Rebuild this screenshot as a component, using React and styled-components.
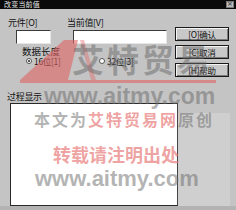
import React from "react";
import styled, { createGlobalStyle } from "styled-components";

const Global = createGlobalStyle`
  html, body { margin: 0; padding: 0; }
  body { width: 236px; height: 210px; overflow: hidden; background: #c3c3c3; }
  * { box-sizing: border-box; }
`;

const CJK = `"Noto Sans CJK SC", "Noto Sans", sans-serif`;

const Window = styled.div`
  position: relative;
  width: 236px;
  height: 210px;
  background: #c4c4c4;
  font-family: ${CJK};
  color: #111;
  display: flex;
  flex-direction: column;
  overflow: hidden;
`;

const TitleBar = styled.div`
  height: 9px;
  background: #0a0a0a;
  display: flex;
  align-items: center;
  justify-content: space-between;
  padding: 0 2px 0 4px;
`;

const Title = styled.span`
  color: #e8e8e8;
  font-size: 7px;
  line-height: 9px;
  letter-spacing: 0.2px;
`;

const CloseBtn = styled.span`
  width: 8px;
  height: 7px;
  background: #bdbdbd;
  border: 1px solid #777;
  font-size: 7px;
  line-height: 5px;
  text-align: center;
  color: #222;
  font-family: "DejaVu Sans", sans-serif;
`;

const Body = styled.div`
  flex: 1;
  display: flex;
  flex-direction: column;
  border-bottom: 8px solid #b3b3b3;
`;

const Top = styled.div`
  display: flex;
  height: 82px;
`;

const Left = styled.div`
  width: 175px;
  display: flex;
  flex-direction: column;
`;

const FieldRow = styled.div`
  display: flex;
  gap: 16px;
  padding: 8px 0 0 8px;
`;

const Field = styled.div`
  display: flex;
  flex-direction: column;
`;

const Label = styled.span`
  font-size: 9px;
  line-height: 12px;
  height: 12px;
  letter-spacing: -0.3px;
  white-space: nowrap;
  margin-left: ${(p) => p.$indent || 0}px;
`;

const Input = styled.div`
  margin-top: 1px;
  margin-left: ${(p) => p.$indent}px;
  width: ${(p) => p.$w}px;
  height: 14px;
  background: #fff;
  border: 1px solid #3a3a3a;
  border-right-color: #e6e6e6;
  border-bottom-color: #e6e6e6;
`;

const GroupTitle = styled(Label)`
  margin-top: 1px;
  margin-left: 22px;
  font-size: 9.5px;
  letter-spacing: 0;
`;

const RadioRow = styled.div`
  display: flex;
  padding-left: 26px;
  margin-top: -1px;
`;

const RadioOpt = styled.div`
  width: 73px;
  display: flex;
  align-items: center;
  gap: 2px;
  font-size: 8.5px;
  line-height: 10px;
  letter-spacing: -0.3px;
`;

const Dot = styled.span`
  width: 6px;
  height: 6px;
  border-radius: 50%;
  background: #fff;
  border: 1px solid #555;
  display: inline-flex;
  align-items: center;
  justify-content: center;
  &::after {
    content: "";
    width: 2px;
    height: 2px;
    border-radius: 50%;
    background: ${(p) => (p.$on ? "#222" : "transparent")};
  }
`;

const Buttons = styled.div`
  display: flex;
  flex-direction: column;
  gap: 4px;
  padding-top: 18px;
`;

const Button = styled.div`
  width: 54px;
  height: 14px;
  background: #c8c8c8;
  border: 1px solid #1a1a1a;
  box-shadow: inset 1px 1px 0 #f4f4f4, inset -1px -1px 0 #7a7a7a;
  font-size: 8.5px;
  line-height: 12px;
  text-align: center;
  letter-spacing: -0.3px;
`;

const Bottom = styled.div`
  display: flex;
  flex-direction: column;
  padding-left: 7px;
`;

const LogRow = styled.div`
  display: flex;
  align-items: flex-end;
  margin-left: 3px;
`;

const LogBox = styled.div`
  width: 168px;
  height: 103px;
  background: #fff;
  border: 1px solid #2a2a2a;
  border-right-color: #444;
`;

const SidePanel = styled.div`
  width: 52px;
  height: 93px;
  background: #cfcfcf;
`;

/* watermark overlay */
const Overlay = styled.div`
  position: absolute;
  inset: 0;
  pointer-events: none;
`;

const Mark = styled.span`
  position: absolute;
  left: ${(p) => p.$x}px;
  top: ${(p) => p.$y}px;
  font-size: ${(p) => p.$size}px;
  line-height: ${(p) => p.$size}px;
  letter-spacing: ${(p) => p.$ls || 0}px;
  font-weight: 700;
  white-space: nowrap;
  color: ${(p) => p.$color || "rgba(105,105,105,0.5)"};
  font-family: ${(p) => (p.$latin ? `"Liberation Sans", Arial, sans-serif` : CJK)};
`;

const Red = styled.span`
  color: rgba(230, 110, 110, 0.65);
`;

const Logo = styled.svg`
  position: absolute;
  left: 0;
  top: 0;
`;

export default function App() {
  return (
    <>
      <Global />
      <Window>
        <TitleBar>
          <Title>改变当前值</Title>
          <CloseBtn>×</CloseBtn>
        </TitleBar>
        <Body>
          <Top>
            <Left>
              <FieldRow>
                <Field>
                  <Label>元件[O]</Label>
                  <Input $indent={8} $w={35} />
                </Field>
                <Field>
                  <Label>当前值[V]</Label>
                  <Input $indent={6} $w={94} />
                </Field>
              </FieldRow>
              <GroupTitle>数据长度</GroupTitle>
              <RadioRow>
                <RadioOpt>
                  <Dot $on />
                  16位[1]
                </RadioOpt>
                <RadioOpt>
                  <Dot />
                  32位[3]
                </RadioOpt>
              </RadioRow>
            </Left>
            <Buttons>
              <Button>[O]确认</Button>
              <Button>[C]取消</Button>
              <Button>[H]帮助</Button>
            </Buttons>
          </Top>
          <Bottom>
            <Label>过程显示</Label>
            <LogRow>
              <LogBox />
              <SidePanel />
            </LogRow>
          </Bottom>
        </Body>
        <Overlay>
          <Logo width="236" height="210" viewBox="0 0 236 210">
            <polygon points="64,40 78,40 68,80 20,80" fill="rgba(225,100,100,0.6)" />
            <polygon points="80,40 84,40 96,80 91,80" fill="rgba(225,100,100,0.4)" />
            <rect x="20" y="80" width="196" height="3" fill="rgba(225,100,100,0.6)" />
          </Logo>
          <Mark $x={72} $y={42} $size={32} $ls={3}>艾特贸易</Mark>
          <Mark $x={44} $y={85} $size={23} $latin>www.aitmy.com</Mark>
          <Mark $x={34} $y={111} $size={16} $ls={2}>
            本文为<Red>艾特贸易网</Red>原创
          </Mark>
          <Mark $x={53} $y={145} $size={18} $color="rgba(230,110,110,0.65)">
            转载请注明出处
          </Mark>
          <Mark $x={35} $y={168} $size={22} $latin>www.aitmy.com</Mark>
        </Overlay>
      </Window>
    </>
  );
}
